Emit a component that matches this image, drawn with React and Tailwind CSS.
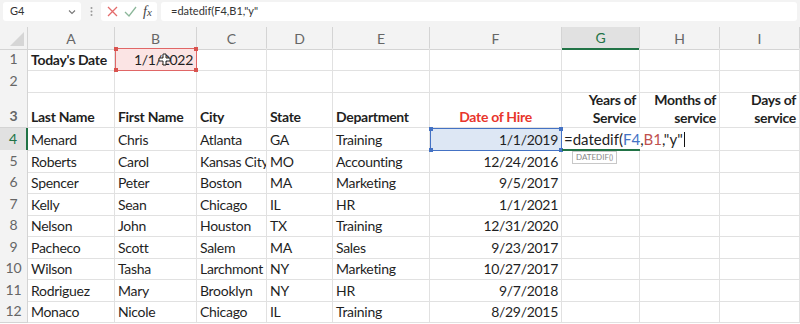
import React from "react";

const cols = ["A", "B", "C", "D", "E", "F", "G", "H", "I"];

const rows = [
  ["Menard", "Chris", "Atlanta", "GA", "Training", "1/1/2019"],
  ["Roberts", "Carol", "Kansas City", "MO", "Accounting", "12/24/2016"],
  ["Spencer", "Peter", "Boston", "MA", "Marketing", "9/5/2017"],
  ["Kelly", "Sean", "Chicago", "IL", "HR", "1/1/2021"],
  ["Nelson", "John", "Houston", "TX", "Training", "12/31/2020"],
  ["Pacheco", "Scott", "Salem", "MA", "Sales", "9/23/2017"],
  ["Wilson", "Tasha", "Larchmont", "NY", "Marketing", "10/27/2017"],
  ["Rodriguez", "Mary", "Brooklyn", "NY", "HR", "9/7/2018"],
  ["Monaco", "Nicole", "Chicago", "IL", "Training", "8/29/2015"],
];

const grid = "grid grid-cols-[28px_87px_82px_70px_66px_97px_132px_78px_80px_80px]";
const cell = "border-r border-b border-[#e1e1e1] px-[3px] whitespace-nowrap overflow-hidden";
const rowHead = "border-r border-b border-[#d4d4d4] bg-[#f3f3f3] text-[#666] text-center flex items-end justify-center pb-[1px] tracking-normal";

function Corners({ color }) {
  const c = `absolute w-[4px] h-[4px] ${color}`;
  return (
    <>
      <span className={`${c} -left-[2px] -top-[2px]`} />
      <span className={`${c} -right-[2px] -top-[2px]`} />
      <span className={`${c} -left-[2px] -bottom-[2px]`} />
      <span className={`${c} -right-[2px] -bottom-[2px]`} />
    </>
  );
}

function FormulaBar() {
  return (
    <div className="flex h-[27px] items-start gap-[4px] bg-[#f3f3f3] px-[3px] pt-[2px] text-[11px] tracking-normal text-[#333]">
      <div className="flex h-[19px] w-[78px] items-center justify-between rounded-[3px] bg-white pl-[7px] pr-[5px]">
        <span>G4</span>
        <svg width="8" height="6" viewBox="0 0 8 6">
          <path d="M1 1.5 L4 4.5 L7 1.5" fill="none" stroke="#777" strokeWidth="1.1" />
        </svg>
      </div>
      <div className="flex h-[19px] w-[12px] items-center justify-center">
        <svg width="3" height="11" viewBox="0 0 3 11">
          <circle cx="1.5" cy="2" r="1" fill="#999" />
          <circle cx="1.5" cy="5.5" r="1" fill="#999" />
          <circle cx="1.5" cy="9" r="1" fill="#999" />
        </svg>
      </div>
      <div className="flex h-[19px] w-[56px] items-center gap-[6px] rounded-[3px] bg-white pl-[6px]">
        <svg width="11" height="11" viewBox="0 0 11 11">
          <path d="M1 1 L10 10 M10 1 L1 10" stroke="#e46b6b" strokeWidth="1.3" />
        </svg>
        <svg width="13" height="11" viewBox="0 0 13 11">
          <path d="M1 6 L5 10 L12 1" fill="none" stroke="#8cb79a" strokeWidth="1.3" />
        </svg>
        <span className="font-['Liberation_Serif',serif] text-[14px] italic leading-none text-[#444]">
          f<span className="text-[11px]">x</span>
        </span>
      </div>
      <div className="flex h-[19px] flex-1 items-center rounded-[3px] bg-white pl-[10px]">
        =datedif(F4,B1,"y"
      </div>
    </div>
  );
}

function ColumnHeaders() {
  return (
    <div className={`${grid} h-[21px] tracking-normal`}>
      <div className="relative border-r border-b border-[#d4d4d4] bg-[#f3f3f3]">
        <svg className="absolute right-[3px] bottom-[3px]" width="14" height="14" viewBox="0 0 14 14">
          <path d="M14 0 L14 14 L0 14 Z" fill="#d6d6d6" />
        </svg>
      </div>
      {cols.map((c) => (
        <div
          key={c}
          className={`flex items-center justify-center border-r border-[#d4d4d4] text-[14px] ${
            c === "G"
              ? "border-b-2 border-b-[#217346] bg-[#e1e1e1] text-[#217346]"
              : "border-b bg-[#f3f3f3] text-[#666]"
          }`}
        >
          {c}
        </div>
      ))}
    </div>
  );
}

export default function App() {
  return (
    <div className="h-[324px] w-[800px] overflow-hidden bg-white font-['Lato',sans-serif] text-[14px] tracking-[-0.3px] text-[#1f1f1f]">
      <FormulaBar />
      <ColumnHeaders />

      {/* row 1 */}
      <div className={`${grid} h-[22px]`}>
        <div className={rowHead}>1</div>
        <div className={`${cell} flex items-end font-bold`}>Today's Date</div>
        <div className="relative flex items-end justify-end border border-[#e06666] bg-[#fbe4e4] px-[3px]">
          <Corners color="bg-[#d9534f]" />
          1/1/2022
          <svg className="absolute left-[42px] top-[4px]" width="13" height="13" viewBox="0 0 13 13">
            <path d="M5 1 H8 V5 H12 V8 H8 V12 H5 V8 H1 V5 H5 Z" fill="#fff" stroke="#222" strokeWidth="1" />
          </svg>
        </div>
        {cols.slice(2).map((c) => (
          <div key={c} className={cell} />
        ))}
      </div>

      {/* row 2 */}
      <div className={`${grid} h-[20px]`}>
        <div className={rowHead}>2</div>
        {cols.map((c) => (
          <div key={c} className={cell} />
        ))}
      </div>

      {/* row 3 */}
      <div className={`${grid} h-[38px] font-bold`}>
        <div className={rowHead}>3</div>
        <div className={`${cell} flex items-end`}>Last Name</div>
        <div className={`${cell} flex items-end`}>First Name</div>
        <div className={`${cell} flex items-end`}>City</div>
        <div className={`${cell} flex items-end`}>State</div>
        <div className={`${cell} flex items-end`}>Department</div>
        <div className={`${cell} flex items-end justify-center text-[#e8352c]`}>Date of Hire</div>
        <div className={`${cell} flex flex-col items-end justify-end leading-[18px]`}>
          <span>Years of</span>
          <span>Service</span>
        </div>
        <div className={`${cell} flex flex-col items-end justify-end leading-[18px]`}>
          <span>Months of</span>
          <span>service</span>
        </div>
        <div className={`${cell} flex flex-col items-end justify-end leading-[18px]`}>
          <span>Days of</span>
          <span>service</span>
        </div>
      </div>

      {rows.map((r, i) => (
        <div key={i} className={`${grid} h-[21.5px]`}>
          <div
            className={
              i === 0
                ? "flex items-end justify-center border-b border-r-2 border-[#d4d4d4] border-r-[#217346] bg-[#e1e1e1] pb-[1px] tracking-normal text-[#217346]"
                : rowHead
            }
          >
            {i + 4}
          </div>
          {r.slice(0, 5).map((v, j) => (
            <div key={j} className={`${cell} flex items-end`}>
              {v}
            </div>
          ))}
          {i === 0 ? (
            <div className="relative flex items-end justify-end border border-[#4472c4] bg-[#dde7f4] px-[3px]">
              <Corners color="bg-[#4472c4]" />
              {r[5]}
            </div>
          ) : (
            <div className={`${cell} flex items-end justify-end`}>{r[5]}</div>
          )}
          {i === 0 ? (
            <div className="relative z-10 flex items-end border-b-2 border-b-[#217346] pl-[2px]">
              <span className="relative z-10 bg-white pr-[2px] text-[15px] leading-[20px] tracking-normal">
                =datedif(<span className="text-[#4472c4]">F4</span>,<span className="text-[#c0504d]">B1</span>,"y"
                <span className="ml-[1px] inline-block h-[15px] w-[1px] translate-y-[2px] bg-[#111]" />
              </span>
              <div className="absolute left-[10px] top-[23px] border border-[#c8c8c8] bg-white px-[3px] text-[8px] leading-[11px] tracking-normal text-[#888]">
                DATEDIF()
              </div>
            </div>
          ) : (
            <div className={cell} />
          )}
          <div className={i === 0 ? "border-r border-b border-[#e1e1e1]" : cell} />
          <div className={cell} />
        </div>
      ))}
    </div>
  );
}
